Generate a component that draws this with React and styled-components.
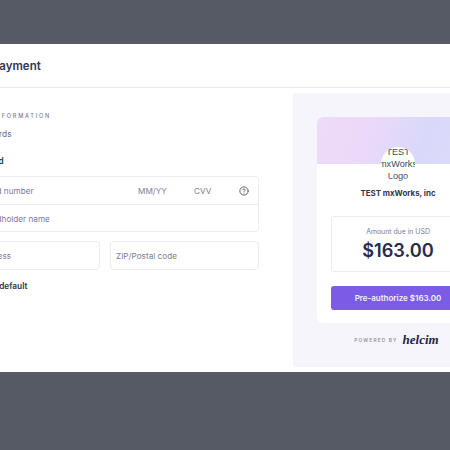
import React from "react";
import styled, { createGlobalStyle } from "styled-components";

const Global = createGlobalStyle`
  html, body { margin: 0; padding: 0; background: #565a64; overflow: hidden; }
  body { font-family: Inter, "Liberation Sans", sans-serif; color: #2a2a4a; }
`;
const Page = styled.div`
  width: 450px; height: 450px; overflow: hidden; padding-top: 44px; box-sizing: border-box;
`;
const Modal = styled.div`
  width: 570px; height: 328px; margin-left: -60px; background: #fff; display: flex; flex-direction: column;
`;
const Header = styled.header`
  height: 44px; box-sizing: border-box; flex: none; display: flex; align-items: center; border-bottom: 1px solid #e9e9f2; padding: 1px 0 0 52px;
`;
const Title = styled.h1`
  margin: 0; font-size: 11.5px; font-weight: 600; color: #34334f;
`;
const Body = styled.div`
  flex: 1; display: flex; min-height: 0;
`;
const Left = styled.section`
  width: 353px; flex: none; box-sizing: border-box; padding: 24px 34px 0 0; display: flex; flex-direction: column;
`;
const Eyebrow = styled.div`
  font-size: 5.6px; font-weight: 500; letter-spacing: 1.75px; color: #7d7c94; text-transform: uppercase; line-height: 8px; margin-left: 10px;
`;
const SavedLink = styled.div`
  font-size: 8.3px; color: #6f6e86; margin: 7px 0 0 23px; line-height: 14px;
`;
const MethodLabel = styled.div`
  font-size: 8.3px; font-weight: 600; color: #34334f; margin: 13px 0 0 18px; line-height: 14px;
`;
const CardBox = styled.div`
  margin: 8px 0 0 37px; border: 1px solid #ebebf4; border-radius: 4px; display: flex; flex-direction: column; height: 56px; box-sizing: border-box;
`;
const CardRow = styled.div`
  height: 27px; display: flex; align-items: center; padding: 1px 0 0 5px; box-sizing: border-box;
  & + & { border-top: 1px solid #ebebf4; }
`;
const Placeholder = styled.span`
  font-size: 8.2px; color: #7d7c94; ${p => p.$w ? `width: ${p.$w}px;` : ""}
`;
const Help = styled.svg`
  width: 10px; height: 10px; flex: none;
`;
const Split = styled.div`
  display: grid; grid-template-columns: 123px 149px; column-gap: 10px; margin: 9px 0 0 37px;
`;
const Input = styled.div`
  height: 29px; box-sizing: border-box; border: 1px solid #ebebf4; border-radius: 4px; display: flex; align-items: center; padding-left: ${p => p.$pad}px;
`;
const SaveDefault = styled.div`
  font-size: 8.3px; font-weight: 600; color: #34334f; margin: 9px 0 0 26px; line-height: 14px;
`;
const Aside = styled.aside`
  width: 210px; height: 274px; margin-top: 5px; flex: none; background: #f6f5fc; border-radius: 3px; box-sizing: border-box; padding: 24px 0 0 24px;
`;
const Card = styled.div`
  width: 162px; height: 206px; background: #fff; border-radius: 6px; display: flex; flex-direction: column; overflow: hidden;
`;
const Banner = styled.div`
  height: 47px; flex: none; background: linear-gradient(110deg, #eedbfa 0%, #ecd9f9 30%, #d9d8fa 65%, #dcdcfb 100%);
`;
const Logo = styled.div`
  width: 34px; height: 34px; border-radius: 50%; background: #fff; margin: -17px auto 0; overflow: hidden; font-size: 9.2px; line-height: 12px; text-align: center; color: #4a4a55; font-family: "Liberation Sans", sans-serif; flex: none; white-space: nowrap; display: flex; align-items: center; justify-content: center;
`;
const Merchant = styled.div`
  font-size: 7.9px; font-weight: 700; color: #34334f; text-align: center; margin-top: 6px; line-height: 12px;
`;
const AmountBox = styled.div`
  margin: 17px 14px 0; height: 56px; box-sizing: border-box; border: 1px solid #ebebf4; border-radius: 3px; text-align: center; padding-top: 10px;
`;
const AmountLabel = styled.div`
  font-size: 6.9px; color: #7d7c94; line-height: 10px;
`;
const AmountValue = styled.div`
  font-size: 18.2px; font-weight: 600; color: #2a2a4a; line-height: 24px; margin-top: 1px;
`;
const Pay = styled.button`
  margin: 14px 14px 0; height: 24px; border: 0; border-radius: 3px; background: #7c5ce6; color: #f4f0ff; font: 600 8px Inter, sans-serif; padding: 0;
`;
const Powered = styled.div`
  display: flex; align-items: center; justify-content: center; gap: 5px; width: 159px; margin-top: 9px; height: 16px;
`;
const PoweredText = styled.span`
  font-size: 4.8px; letter-spacing: 1.15px; color: #8a899c; font-weight: 500;
`;
const Brand = styled.span`
  font: italic 700 13px "Liberation Serif", serif; color: #25244a;
`;

export default function App() {
  return (
    <Page>
      <Global />
      <Modal>
        <Header><Title>Payment</Title></Header>
        <Body>
          <Left>
            <Eyebrow>Payment Information</Eyebrow>
            <SavedLink>Saved cards</SavedLink>
            <MethodLabel>Credit Card</MethodLabel>
            <CardBox>
              <CardRow>
                <Placeholder $w={155}>Card number</Placeholder>
                <Placeholder $w={56}>MM/YY</Placeholder>
                <Placeholder $w={45}>CVV</Placeholder>
                <Help viewBox="0 0 24 24" fill="none" stroke="#55546c" strokeWidth="2.2" strokeLinecap="round" strokeLinejoin="round">
                  <circle cx="12" cy="12" r="10" />
                  <path d="M9.1 9a3 3 0 0 1 5.8 1c0 2-3 3-3 3" />
                  <path d="M12 17h.01" />
                </Help>
              </CardRow>
              <CardRow><Placeholder>Cardholder name</Placeholder></CardRow>
            </CardBox>
            <Split>
              <Input $pad={1}><Placeholder>Address</Placeholder></Input>
              <Input $pad={5}><Placeholder>ZIP/Postal code</Placeholder></Input>
            </Split>
            <SaveDefault>Save as default</SaveDefault>
          </Left>
          <Aside>
            <Card>
              <Banner />
              <Logo><div>TEST<br />mxWorks<br />Logo</div></Logo>
              <Merchant>TEST mxWorks, inc</Merchant>
              <AmountBox>
                <AmountLabel>Amount due in USD</AmountLabel>
                <AmountValue>$163.00</AmountValue>
              </AmountBox>
              <Pay>Pre-authorize $163.00</Pay>
            </Card>
            <Powered>
              <PoweredText>POWERED BY</PoweredText>
              <Brand>helcim</Brand>
            </Powered>
          </Aside>
        </Body>
      </Modal>
    </Page>
  );
}
